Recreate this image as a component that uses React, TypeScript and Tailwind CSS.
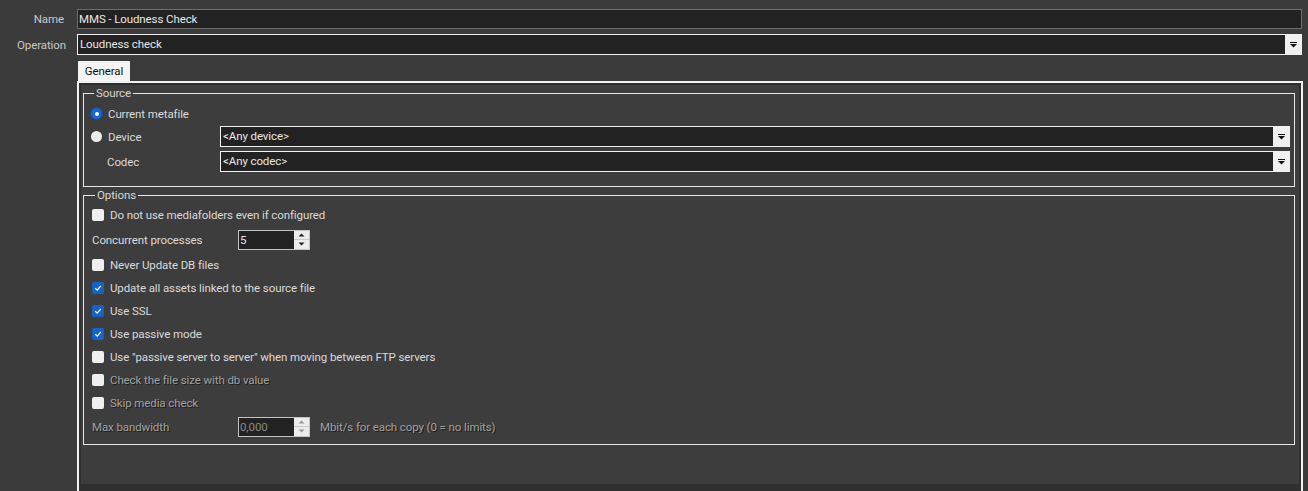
import React from 'react';

const DIS = 'text-[#a2a2a2] [text-shadow:1px_1px_0_#1c1c1c]';

function DropArrow() {
  return (
    <svg width="9" height="6" viewBox="0 0 9 6">
      <rect x="1" y="0" width="7" height="1" fill="#111" />
      <path d="M1 2h7L4.5 5.5z" fill="#111" />
    </svg>
  );
}

function Select({ text }: { text: string }) {
  return (
    <div className="flex h-[21px] flex-1 border border-[#f2f2f2] bg-[#222]">
      <span className="flex-1 px-[2px] leading-[19px] text-[#e6e6e6]">{text}</span>
      <span className="flex w-[16px] items-center justify-center bg-[#f0f0f0]">
        <DropArrow />
      </span>
    </div>
  );
}

function Radio({ checked }: { checked?: boolean }) {
  return checked ? (
    <span className="flex h-[11px] w-[11px] items-center justify-center rounded-full bg-[#1767d0] ring-1 ring-[#0d4ea6]">
      <span className="h-[4px] w-[4px] rounded-full bg-white" />
    </span>
  ) : (
    <span className="h-[11px] w-[11px] rounded-full bg-[#ececec]" />
  );
}

function Check({ checked }: { checked?: boolean }) {
  return checked ? (
    <span className="flex h-[12px] w-[12px] items-center justify-center rounded-[2px] bg-[#1663c7]">
      <svg width="12" height="12" viewBox="0 0 12 12">
        <path d="M3.3 6.3 5.2 8.1 8.8 4" fill="none" stroke="#fff" strokeWidth="1.2" />
      </svg>
    </span>
  ) : (
    <span className="h-[12px] w-[12px] rounded-[2px] bg-[#efefef]" />
  );
}

function Spin({ value, disabled }: { value: string; disabled?: boolean }) {
  const tri = disabled ? '#9a9a9a' : '#222';
  return (
    <div className="flex h-[20px] w-[72px] border border-[#c4c4c4]">
      <span className={`flex-1 bg-[#222] px-[1px] leading-[18px] ${disabled ? 'text-[#8a8a8a]' : 'text-[#e6e6e6]'}`}>
        {value}
      </span>
      <span className="flex w-[15px] flex-col bg-[#ececec]">
        <span className="flex flex-1 items-center justify-center border-b border-[#c8c8c8]">
          <svg width="7" height="4" viewBox="0 0 7 4"><path d="M0.5 3.5h6L3.5 0.5z" fill={tri} /></svg>
        </span>
        <span className="flex flex-1 items-center justify-center">
          <svg width="7" height="4" viewBox="0 0 7 4"><path d="M0.5 0.5h6L3.5 3.5z" fill={tri} /></svg>
        </span>
      </span>
    </div>
  );
}

function CheckRow({ label, checked, disabled }: { label: string; checked?: boolean; disabled?: boolean }) {
  return (
    <div className="flex h-[23px] items-center gap-[6px]">
      <Check checked={checked} />
      <span className={disabled ? DIS : 'text-[#dadada]'}>{label}</span>
    </div>
  );
}

export default function App() {
  return (
    <div className="h-[491px] w-[1308px] overflow-hidden bg-[#3b3b3b] pt-[9px] font-['Roboto','Liberation_Sans',sans-serif] text-[11.5px] leading-[14px] tracking-[-0.1px]">
      <div className="flex items-center">
        <span className="w-[64px] text-right text-[#c8c8c8]">Name</span>
        <div className="ml-[13px] mr-[6px] h-[20px] flex-1 border border-[#6e6e6e] bg-[#222] px-[1px] leading-[18px] text-[#e6e6e6]">
          MMS - Loudness Check
        </div>
      </div>
      <div className="mt-[5px] flex items-center">
        <span className="w-[66px] text-right text-[#c8c8c8]">Operation</span>
        <div className="ml-[11px] mr-[6px] flex flex-1">
          <Select text="Loudness check" />
        </div>
      </div>

      <div className="ml-[77px] mr-[5px] mt-[6px]">
        <div className="ml-[1px] flex h-[20px] w-[52px] items-center justify-center bg-[#f4f4f4] text-[#111]">General</div>
        <div className="border-2 border-[#f2f2f2] bg-[#2f2f2f] p-[2px] pb-[20px]">
          <div className="h-[399px] bg-[#3d3d3d] pl-[2px] pr-[4px] pt-[1px]">
            <fieldset className="border border-[#e6e6e6] pb-[14px] pl-[7px] pr-[4px] pt-[3px]">
              <legend className="ml-[3px] px-[2px] text-[#d6d6d6]">Source</legend>
              <div className="flex h-[21px] items-center gap-[6px]">
                <Radio checked />
                <span className="text-[#dadada]">Current metafile</span>
              </div>
              <div className="mt-[2px] flex h-[21px] items-center">
                <div className="flex w-[129px] items-center gap-[6px]">
                  <Radio />
                  <span className="text-[#dadada]">Device</span>
                </div>
                <Select text="<Any device>" />
              </div>
              <div className="mt-[4px] flex h-[21px] items-center">
                <span className="w-[129px] pl-[16px] text-[#dadada]">Codec</span>
                <Select text="<Any codec>" />
              </div>
            </fieldset>

            <fieldset className="mt-[1px] border border-[#e6e6e6] pb-[5px] pl-[8px] pt-[1px]">
              <legend className="ml-[3px] px-[2px] text-[#d6d6d6]">Options</legend>
              <CheckRow label="Do not use mediafolders even if configured" />
              <div className="flex h-[27px] items-center">
                <span className="w-[146px] text-[#dadada]">Concurrent processes</span>
                <Spin value="5" />
              </div>
              <CheckRow label="Never Update DB files" />
              <CheckRow label="Update all assets linked to the source file" checked />
              <CheckRow label="Use SSL" checked />
              <CheckRow label="Use passive mode" checked />
              <CheckRow label={'Use "passive server to server" when moving between FTP servers'} />
              <CheckRow label="Check the file size with db value" disabled />
              <CheckRow label="Skip media check" disabled />
              <div className="flex h-[25px] items-center">
                <span className={`w-[146px] ${DIS}`}>Max bandwidth</span>
                <Spin value="0,000" disabled />
                <span className={`ml-[10px] ${DIS}`}>Mbit/s for each copy (0 = no limits)</span>
              </div>
            </fieldset>
          </div>
        </div>
      </div>
    </div>
  );
}
